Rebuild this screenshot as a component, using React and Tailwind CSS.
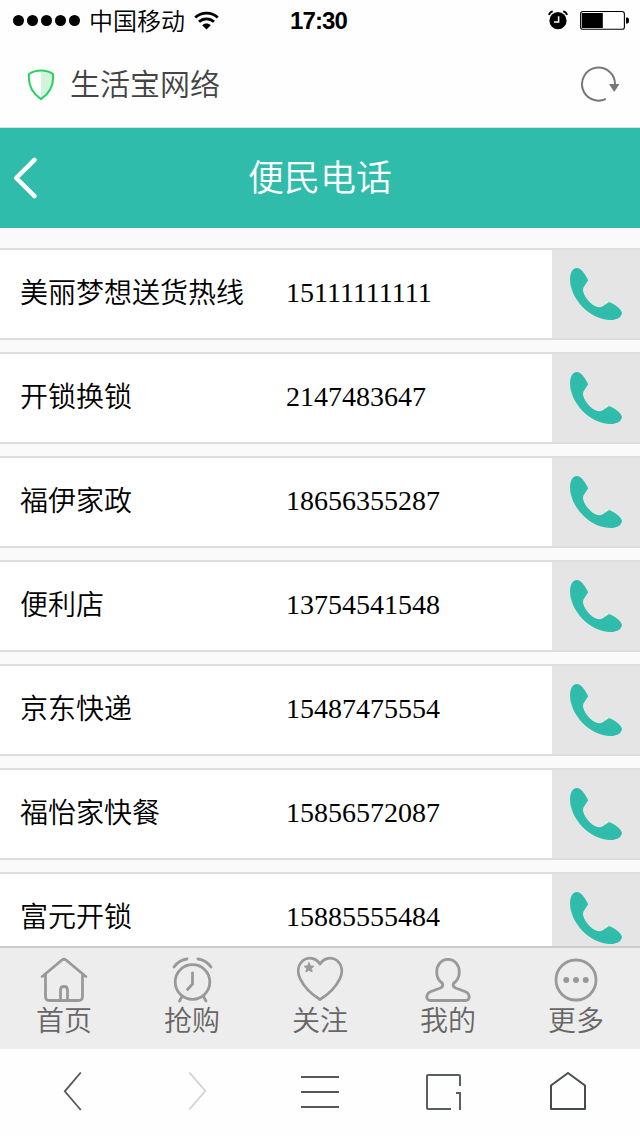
const phones = [
  { name: "美丽梦想送货热线", number: "15111111111" },
  { name: "开锁换锁", number: "2147483647" },
  { name: "福伊家政", number: "18656355287" },
  { name: "便利店", number: "13754541548" },
  { name: "京东快递", number: "15487475554" },
  { name: "福怡家快餐", number: "15856572087" },
  { name: "富元开锁", number: "15885555484" },
];

function StatusBar() {
  return (
    <div className="flex h-10 items-center justify-between pl-[13px] pr-[11px] text-black">
      <div className="flex w-[277px] items-center">
        <div className="flex gap-[3px]">
          {[0, 1, 2, 3, 4].map((i) => (
            <span key={i} className="h-[11px] w-[11px] rounded-full bg-black" />
          ))}
        </div>
        <span className="ml-[9px] text-2xl leading-[36px] font-[350]">中国移动</span>
        <svg className="ml-[9px]" width="25" height="19" viewBox="0 0 25 19" fill="none" stroke="#000" strokeWidth="2.8">
          <path d="M1.2 6.6C7.5 0.6 17.5 0.6 23.8 6.6" />
          <path d="M5 10.8C9.2 6.8 15.8 6.8 20 10.8" />
          <path d="M8.2 14.2C10.6 12 14.4 12 16.8 14.2L12.5 18.4Z" fill="#000" stroke="none" />
        </svg>
      </div>
      <span className="flex-1 pt-0.5 font-['Liberation_Sans',sans-serif] text-2xl leading-8 font-bold tracking-[-0.9px]">17:30</span>
      <svg width="20" height="20" viewBox="0 0 20 20" fill="none">
        <circle cx="10" cy="10.7" r="8.6" fill="#000" />
        <path d="M1 5C1.4 3 2.8 1.8 4.8 1.4M19 5C18.6 3 17.2 1.8 15.2 1.4" stroke="#000" strokeWidth="1.8" />
        <path d="M10.6 6.2V12H6" stroke="#fff" strokeWidth="1.5" />
      </svg>
      <svg className="ml-3" width="49" height="20" viewBox="0 0 49 20">
        <rect x="0.6" y="1.5" width="43.8" height="17.8" rx="2.4" fill="none" stroke="#000" strokeWidth="1.1" />
        <rect x="1.8" y="3" width="21" height="15" fill="#000" />
        <path d="M46 7.5H47.5C48.3 7.5 49 8.6 49 10.4S48.3 13.5 47.5 13.5H46Z" fill="#000" />
      </svg>
    </div>
  );
}

function AddressBar() {
  return (
    <div className="flex h-[88px] items-center border-b border-[#dedede] pl-[27px] pr-5">
      <svg className="mt-0.5" width="28" height="32" viewBox="0 0 28 32">
        <path d="M14 2C18.5 2 22.5 3.2 26 5.2C26.6 15 24.5 23 14 30Z" fill="#d2f4dd" />
        <path
          d="M14 1.6C18.5 1.6 22.5 2.8 26 5C27 15 24 23.5 14 30.2C4 23.5 1 15 2 5C5.5 2.8 9.5 1.6 14 1.6Z"
          fill="none"
          stroke="#22d35b"
          strokeWidth="2"
          strokeLinejoin="round"
        />
      </svg>
      <span className="mb-1 ml-[15px] flex-1 text-3xl font-[350] text-[#444]">生活宝网络</span>
      <svg width="40" height="36" viewBox="0 0 40 36" fill="none" stroke="#74787d" strokeWidth="2">
        <path d="M35 18A16.5 16.5 0 1 0 25.8 32.9" />
        <path d="M29 18H39.5L34.2 26Z" fill="#74787d" stroke="none" />
      </svg>
    </div>
  );
}

function Header() {
  return (
    <header className="flex h-[100px] items-center bg-[#2fbcaa] text-white">
      <svg width="50" height="50" viewBox="0 0 50 50" fill="none" stroke="#fff" strokeWidth="4.5" strokeLinecap="round" strokeLinejoin="round">
        <path d="M34.5 6.8L16.2 25L34.5 43.2" />
      </svg>
      <h1 className="mr-[50px] mb-1.5 flex-1 text-center text-4xl font-[350]">便民电话</h1>
    </header>
  );
}

function PhoneRow({ name, number }) {
  return (
    <li className="flex h-[92px] shrink-0 border-y-2 border-[#ddd] bg-white text-[28px] leading-[82px] text-black">
      <span className="w-[286px] pl-5 font-[350]">{name}</span>
      <span className="flex-1 pt-0.5 font-['Liberation_Serif',serif]">{number}</span>
      <a href={`tel:${number}`} className="flex w-[88px] items-center justify-center bg-[#e5e5e5]">
        <svg width="54" height="54" viewBox="0 0 54 54" fill="#2fbcaa">
          <path d="M8 1C12 1 16.5 7.5 19.2 13.3L14.5 20.5Q13.2 23 15.3 27.7C17 31 20.5 35.5 23.7 37.7C27 40 30.5 41 33.7 39.3L40.3 35C46 37.5 52.5 42 53 46C52 51 47 53 42 53C20 53 1 31 1 12C1.5 5 3.5 1 8 1Z" />
        </svg>
      </a>
    </li>
  );
}

const tabs = [
  {
    label: "首页",
    icon: (
      <>
        <path d="M2.2 20.5L22 4Q24 2.5 26 4L45.8 20.5" />
        <path d="M5.5 19V40.5Q5.5 44.5 9.5 44.5H38.5Q42.5 44.5 42.5 40.5V19" />
        <path d="M20.5 44V34Q20.5 30.5 24 30.5T27.5 34V44" />
      </>
    ),
  },
  {
    label: "抢购",
    icon: (
      <>
        <circle cx="24.5" cy="26" r="17.3" />
        <path d="M24.5 17V28L19.5 33.5M6 11Q11 4 19 3M43 11Q38 4 30 3M14 40.5L11.5 45M35.5 40.5L38 45" />
      </>
    ),
  },
  {
    label: "关注",
    icon: (
      <>
        <path d="M24 8C20 1.5 12 0.5 7 4.5C2 9 1 16 4 22.5C8 31 15 38 24 43.5C33 38 40 31 44 22.5C47 16 46 9 41 4.5C36 0.5 28 1.5 24 8Z" />
        <path d="M13 6.5L14.5 9.7L18 10.2L15.5 12.5L16.2 16L13 14.3L9.8 16L10.5 12.5L8 10.2L11.5 9.7Z" fill="#999" strokeWidth="0.8" />
      </>
    ),
  },
  {
    label: "我的",
    icon: (
      <path d="M24 3.3C17 3.3 12.7 9.5 12.7 16C12.7 20.5 15 25 18.5 27.5C19.5 30 18.5 31 16.5 32L7 35.5C4 36.8 2.8 38.5 2.8 41Q3 44.5 6.5 44.5H41.5Q45 44.5 45.2 41C45.2 38.5 44 36.8 41 35.5L31.5 32C29.5 31 28.5 30 29.5 27.5C33 25 35.3 20.5 35.3 16C35.3 9.5 31 3.3 24 3.3Z" />
    ),
  },
  {
    label: "更多",
    icon: (
      <>
        <circle cx="24" cy="24" r="20" />
        <g fill="#999" stroke="none">
          <circle cx="14.3" cy="24" r="3" />
          <circle cx="24" cy="24" r="3" />
          <circle cx="33.7" cy="24" r="3" />
        </g>
      </>
    ),
  },
];

function TabBar() {
  return (
    <nav className="flex h-[103px] border-t-2 border-[#ccc] bg-[#ededed]">
      {tabs.map((tab) => (
        <a key={tab.label} className="flex flex-1 flex-col items-center pt-2 text-[#666]">
          <svg className="shrink-0" width="48" height="48" viewBox="0 0 48 48" fill="none" stroke="#999" strokeWidth="2.8" strokeLinecap="round" strokeLinejoin="round">
            {tab.icon}
          </svg>
          <span className="-mt-0.5 text-[28px] leading-[34px] font-[350]">{tab.label}</span>
        </a>
      ))}
    </nav>
  );
}

function BrowserBar() {
  return (
    <div className="flex h-[87px] items-start justify-between px-[52px] pt-[23px]">
      {/* back */}
      <svg width="40" height="40" viewBox="0 0 40 40" fill="none" stroke="#54585c" strokeWidth="1.8">
        <path d="M28.8 0.5L12.8 19.3L28.8 38" />
      </svg>
      {/* forward */}
      <svg width="40" height="40" viewBox="0 0 40 40" fill="none" stroke="#d2d2d2" strokeWidth="1.8">
        <path d="M13.3 0.5L29.3 19L13.3 37.5" />
      </svg>
      <svg width="40" height="40" viewBox="0 0 40 40" fill="none" stroke="#54585c" strokeWidth="2">
        <path d="M1 5H39M1 20H39M1 35H39" />
      </svg>
      {/* open pages */}
      <svg width="40" height="40" viewBox="0 0 40 40" fill="none" stroke="#5a5e62" strokeWidth="2">
        <path d="M36 14V4Q36 3 35 3H4Q3 3 3 4V36Q3 37 4 37H27M32 21H36V38" />
      </svg>
      <svg width="40" height="40" viewBox="0 0 40 40" fill="none" stroke="#484b4e" strokeWidth="2" strokeLinejoin="round">
        <path d="M3 13.5L20 1L37 13.5V37H3Z" />
      </svg>
    </div>
  );
}

export default function App() {
  return (
    <div className="flex h-[1136px] w-[640px] flex-col overflow-hidden bg-[#fefefe] font-['Noto_Sans_CJK_SC',sans-serif]">
      <StatusBar />
      <AddressBar />
      <Header />
      <ul className="flex min-h-0 flex-1 flex-col gap-3 overflow-hidden bg-[#fafafa] pt-5">
        {phones.map((phone) => (
          <PhoneRow key={phone.number} name={phone.name} number={phone.number} />
        ))}
      </ul>
      <TabBar />
      <BrowserBar />
    </div>
  );
}
